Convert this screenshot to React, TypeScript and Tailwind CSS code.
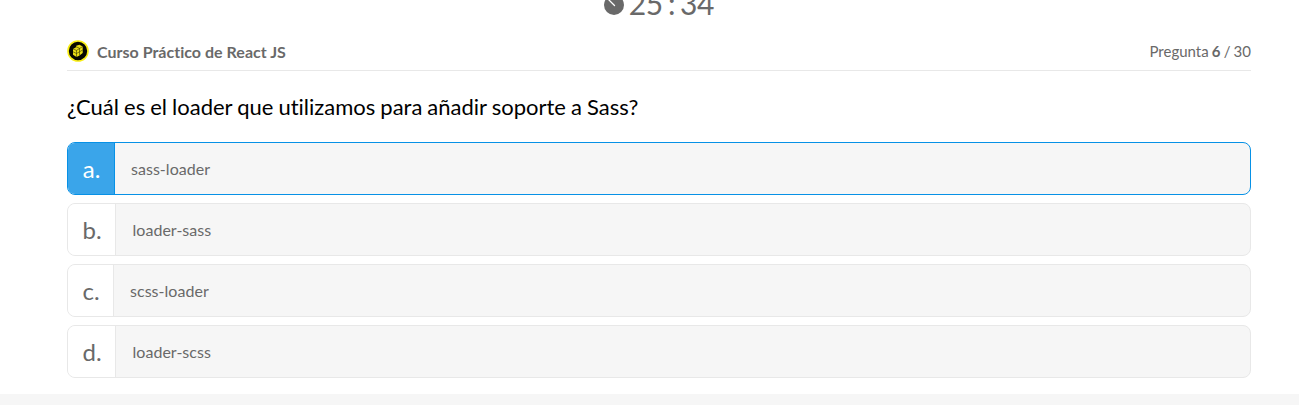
const options = [
  { letter: 'a', text: 'sass-loader', cell: 'w-[46px]', inset: 'pl-4' },
  { letter: 'b', text: 'loader-sass', cell: 'w-[47px]', inset: 'pl-[16.5px]' },
  { letter: 'c', text: 'scss-loader', cell: 'w-[45px]', inset: 'pl-4' },
  { letter: 'd', text: 'loader-scss', cell: 'w-[47px]', inset: 'pl-[16.5px]' },
];

function TimerIcon() {
  return (
    <svg width="20" height="20" viewBox="0 0 20 20" className="mt-[-5px]">
      <circle cx="10" cy="10" r="10" fill="#696969" />
      <path d="M4.5 4.5L10.5 10.5" stroke="#fff" strokeWidth="1.3" strokeLinecap="round" />
    </svg>
  );
}

function CourseBadge() {
  return (
    <svg width="22" height="22" viewBox="0 0 22 22" className="mt-[-2px] shrink-0">
      <circle cx="11" cy="11" r="10" fill="#080900" stroke="#f9ee16" strokeWidth="1.6" />
      <path d="M6 9L9 7.2L9.2 5.8L12.5 4.8L15.7 6.4V13L12.5 15.4L9.5 17L6 14.8Z" fill="#e9dd16" />
      <path d="M6 9L9.5 10.4L15.7 6.6M9.5 10.4V17M6 11.8L9.5 13.5L15.7 10M12.5 8.2V15.4M9 6.8L12.4 8.2" fill="none" stroke="#363500" strokeWidth=".6" />
    </svg>
  );
}

export default function App() {
  return (
    <div className="h-[405px] overflow-hidden bg-[#f6f6f6] font-['Lato',sans-serif] text-[#696969] [font-variant-ligatures:none]">
      <main className="h-[394px] bg-white pl-[67px] pr-12">
        <div className="flex h-[34px] justify-center">
          <div className="flex h-[20px] items-start gap-[5px]">
            <TimerIcon />
            <time className="-mt-[15px] whitespace-pre text-[30px] leading-[36px] tracking-[-0.4px] [word-spacing:-2.2px]">25 : 34</time>
          </div>
        </div>
        <header className="flex h-[37px] items-center justify-between border-b border-[#e8e8e8]">
          <div className="flex items-center gap-2">
            <CourseBadge />
            <h1 className="text-base leading-5 font-bold tracking-[0.02px]">Curso Práctico de React JS</h1>
          </div>
          <p className="-mt-0.5 text-[15px] leading-5 [word-spacing:-0.7px]">Pregunta <b>6</b> / 30</p>
        </header>
        <h2 className="pt-[22px] text-[22px] leading-[28px] text-black [word-spacing:-0.6px]">¿Cuál es el loader que utilizamos para añadir soporte a Sass?</h2>
        <div className="mt-[21px] flex flex-col gap-2">
          {options.map((option, index) => (
            <button
              key={option.letter}
              className={`flex h-[53px] items-stretch overflow-hidden rounded-[8px] border bg-[#f6f6f6] text-left ${index === 0 ? 'border-[#0791e6]' : 'border-[#e8e8e8]'}`}
            >
              <span className={`box-content flex shrink-0 items-center justify-center border-r pt-px text-2xl leading-7 ${option.cell} ${index === 0 ? 'border-[#0791e6] bg-[#3aa5ea] text-white' : 'border-[#e8e8e8] bg-white'}`}>
                <span className="pl-px">{option.letter}.</span>
              </span>
              <span className={`flex items-center text-base tracking-[0.03px] ${option.inset}`}>{option.text}</span>
            </button>
          ))}
        </div>
      </main>
    </div>
  );
}
